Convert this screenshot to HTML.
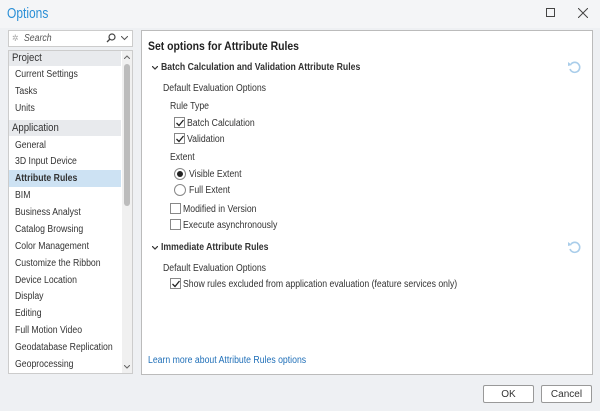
<!DOCTYPE html>
<html><head><style>
*{margin:0;padding:0;box-sizing:border-box}
body{width:600px;height:411px;background:#eef0f3;font-family:"Liberation Sans",sans-serif;font-size:10px;color:#333;position:relative;overflow:hidden}
.a{position:absolute;white-space:nowrap}
.t{line-height:15px;transform:scaleX(0.87);transform-origin:0 0}
.cb{position:absolute;width:11px;height:11px;border:1px solid #888;background:#fff}
.cb svg{position:absolute;left:0;top:0}
.rd{position:absolute;width:12px;height:12px;border:1px solid #888;border-radius:50%;background:#fff}
</style></head><body>
<div class="a" style="left:0;top:0;width:600px;height:28px;background:#f4f5f7"></div>
<div class="a" style="left:7px;top:4px;font-size:15px;color:#2b8fd6;line-height:20px;transform:scaleX(0.8);transform-origin:0 0">Options</div>
<div class="a" style="left:546px;top:8px;width:9px;height:9px;border:1px solid #444"></div>
<svg class="a" style="left:578px;top:8px" width="10" height="10"><path d="M0 0L10 10M10 0L0 10" stroke="#444" stroke-width="1"/></svg>

<div class="a" style="left:8px;top:30px;width:125px;height:17px;background:#fff;border:1px solid #ccc"></div>
<div class="a t" style="left:12px;top:31px;color:#aaa;font-size:9px">✲</div>
<div class="a t" style="left:24px;top:31px;font-style:italic;color:#555">Search</div>
<svg class="a" style="left:106px;top:33px" width="10" height="10"><circle cx="6" cy="4" r="3" fill="none" stroke="#444" stroke-width="1.2"/><path d="M4 6L1 9" stroke="#444" stroke-width="1.3"/></svg>
<svg class="a" style="left:121px;top:36px" width="7" height="5"><path d="M0 0L3.5 3.5L7 0" fill="none" stroke="#555"/></svg>

<div class="a" style="left:8px;top:50px;width:125px;height:324px;background:#fff;border:1px solid #ccc"></div>
<div class="a" style="left:9px;top:51px;width:112px;height:15px;background:#e8eaed"></div>
<div class="a" style="left:9px;top:120px;width:112px;height:16px;background:#e8eaed"></div>
<div class="a" style="left:9px;top:170px;width:112px;height:17px;background:#cde2f3"></div>
<div class="a" style="left:122px;top:51px;width:10px;height:322px;background:#f0f0f0"></div>
<div class="a" style="left:124px;top:64px;width:6px;height:142px;background:#bcbcbc;border-radius:3px"></div>
<svg class="a" style="left:124px;top:55px" width="6" height="4"><path d="M0 4L3 1L6 4" fill="none" stroke="#666"/></svg>
<svg class="a" style="left:124px;top:365px" width="6" height="4"><path d="M0 0L3 3L6 0" fill="none" stroke="#666"/></svg>
<div class="a t" style="left:12px;top:51px;font-size:11px;color:#333">Project</div>
<div class="a t" style="left:15px;top:67px">Current Settings</div>
<div class="a t" style="left:15px;top:84px">Tasks</div>
<div class="a t" style="left:15px;top:101px">Units</div>
<div class="a t" style="left:12px;top:121px;font-size:11px">Application</div>
<div class="a t" style="left:15px;top:138px">General</div>
<div class="a t" style="left:15px;top:154px">3D Input Device</div>
<div class="a t" style="left:15px;top:171px;font-weight:bold">Attribute Rules</div>
<div class="a t" style="left:15px;top:188px">BIM</div>
<div class="a t" style="left:15px;top:205px">Business Analyst</div>
<div class="a t" style="left:15px;top:222px">Catalog Browsing</div>
<div class="a t" style="left:15px;top:239px">Color Management</div>
<div class="a t" style="left:15px;top:256px">Customize the Ribbon</div>
<div class="a t" style="left:15px;top:273px">Device Location</div>
<div class="a t" style="left:15px;top:289px">Display</div>
<div class="a t" style="left:15px;top:306px">Editing</div>
<div class="a t" style="left:15px;top:323px">Full Motion Video</div>
<div class="a t" style="left:15px;top:340px">Geodatabase Replication</div>
<div class="a t" style="left:15px;top:357px">Geoprocessing</div>

<div class="a" style="left:141px;top:30px;width:452px;height:345px;background:#fff;border:1px solid #bbb"></div>
<div class="a t" style="left:148px;top:38px;font-size:12px;font-weight:bold;color:#222;line-height:16px">Set options for Attribute Rules</div>
<svg class="a" style="left:152px;top:66px" width="6" height="4"><path d="M0 0L3 3L6 0" fill="none" stroke="#333" stroke-width="1.2"/></svg>
<div class="a t" style="left:161px;top:60px;font-weight:bold;color:#333">Batch Calculation and Validation Attribute Rules</div>
<svg class="a" style="left:567px;top:60px" width="15" height="14"><path d="M4 4A5 5 0 1 1 3 9" fill="none" stroke="#a9cdea" stroke-width="1.6"/><path d="M1 2L5 5L1 6Z" fill="#a9cdea"/></svg>
<div class="a t" style="left:163px;top:81px">Default Evaluation Options</div>
<div class="a t" style="left:170px;top:99px">Rule Type</div>
<div class="cb" style="left:174px;top:117px"><svg width="10" height="10"><path d="M1.5 5L4 7.5L8.5 2" fill="none" stroke="#222" stroke-width="1.3"/></svg></div>
<div class="a t" style="left:187px;top:116px">Batch Calculation</div>
<div class="cb" style="left:174px;top:133px"><svg width="10" height="10"><path d="M1.5 5L4 7.5L8.5 2" fill="none" stroke="#222" stroke-width="1.3"/></svg></div>
<div class="a t" style="left:187px;top:132px">Validation</div>
<div class="a t" style="left:170px;top:150px">Extent</div>
<div class="rd" style="left:174px;top:168px"><div style="position:absolute;left:2px;top:2px;width:6px;height:6px;border-radius:50%;background:#222"></div></div>
<div class="a t" style="left:189px;top:167px">Visible Extent</div>
<div class="rd" style="left:174px;top:184px"></div>
<div class="a t" style="left:189px;top:183px">Full Extent</div>
<div class="cb" style="left:170px;top:203px"></div>
<div class="a t" style="left:183px;top:202px">Modified in Version</div>
<div class="cb" style="left:170px;top:219px"></div>
<div class="a t" style="left:183px;top:218px">Execute asynchronously</div>
<svg class="a" style="left:152px;top:246px" width="6" height="4"><path d="M0 0L3 3L6 0" fill="none" stroke="#333" stroke-width="1.2"/></svg>
<div class="a t" style="left:161px;top:240px;font-weight:bold">Immediate Attribute Rules</div>
<svg class="a" style="left:567px;top:240px" width="15" height="14"><path d="M4 4A5 5 0 1 1 3 9" fill="none" stroke="#a9cdea" stroke-width="1.6"/><path d="M1 2L5 5L1 6Z" fill="#a9cdea"/></svg>
<div class="a t" style="left:163px;top:261px">Default Evaluation Options</div>
<div class="cb" style="left:170px;top:278px"><svg width="10" height="10"><path d="M1.5 5L4 7.5L8.5 2" fill="none" stroke="#222" stroke-width="1.3"/></svg></div>
<div class="a t" style="left:183px;top:277px">Show rules excluded from application evaluation (feature services only)</div>
<div class="a t" style="left:148px;top:353px;color:#1f6fb8;font-size:10px">Learn more about Attribute Rules options</div>

<div class="a" style="left:483px;top:385px;width:51px;height:18px;background:#fff;border:1px solid #999;border-radius:2px;text-align:center;line-height:17px">OK</div>
<div class="a" style="left:541px;top:385px;width:51px;height:18px;background:#fff;border:1px solid #999;border-radius:2px;text-align:center;line-height:17px">Cancel</div>
</body></html>
